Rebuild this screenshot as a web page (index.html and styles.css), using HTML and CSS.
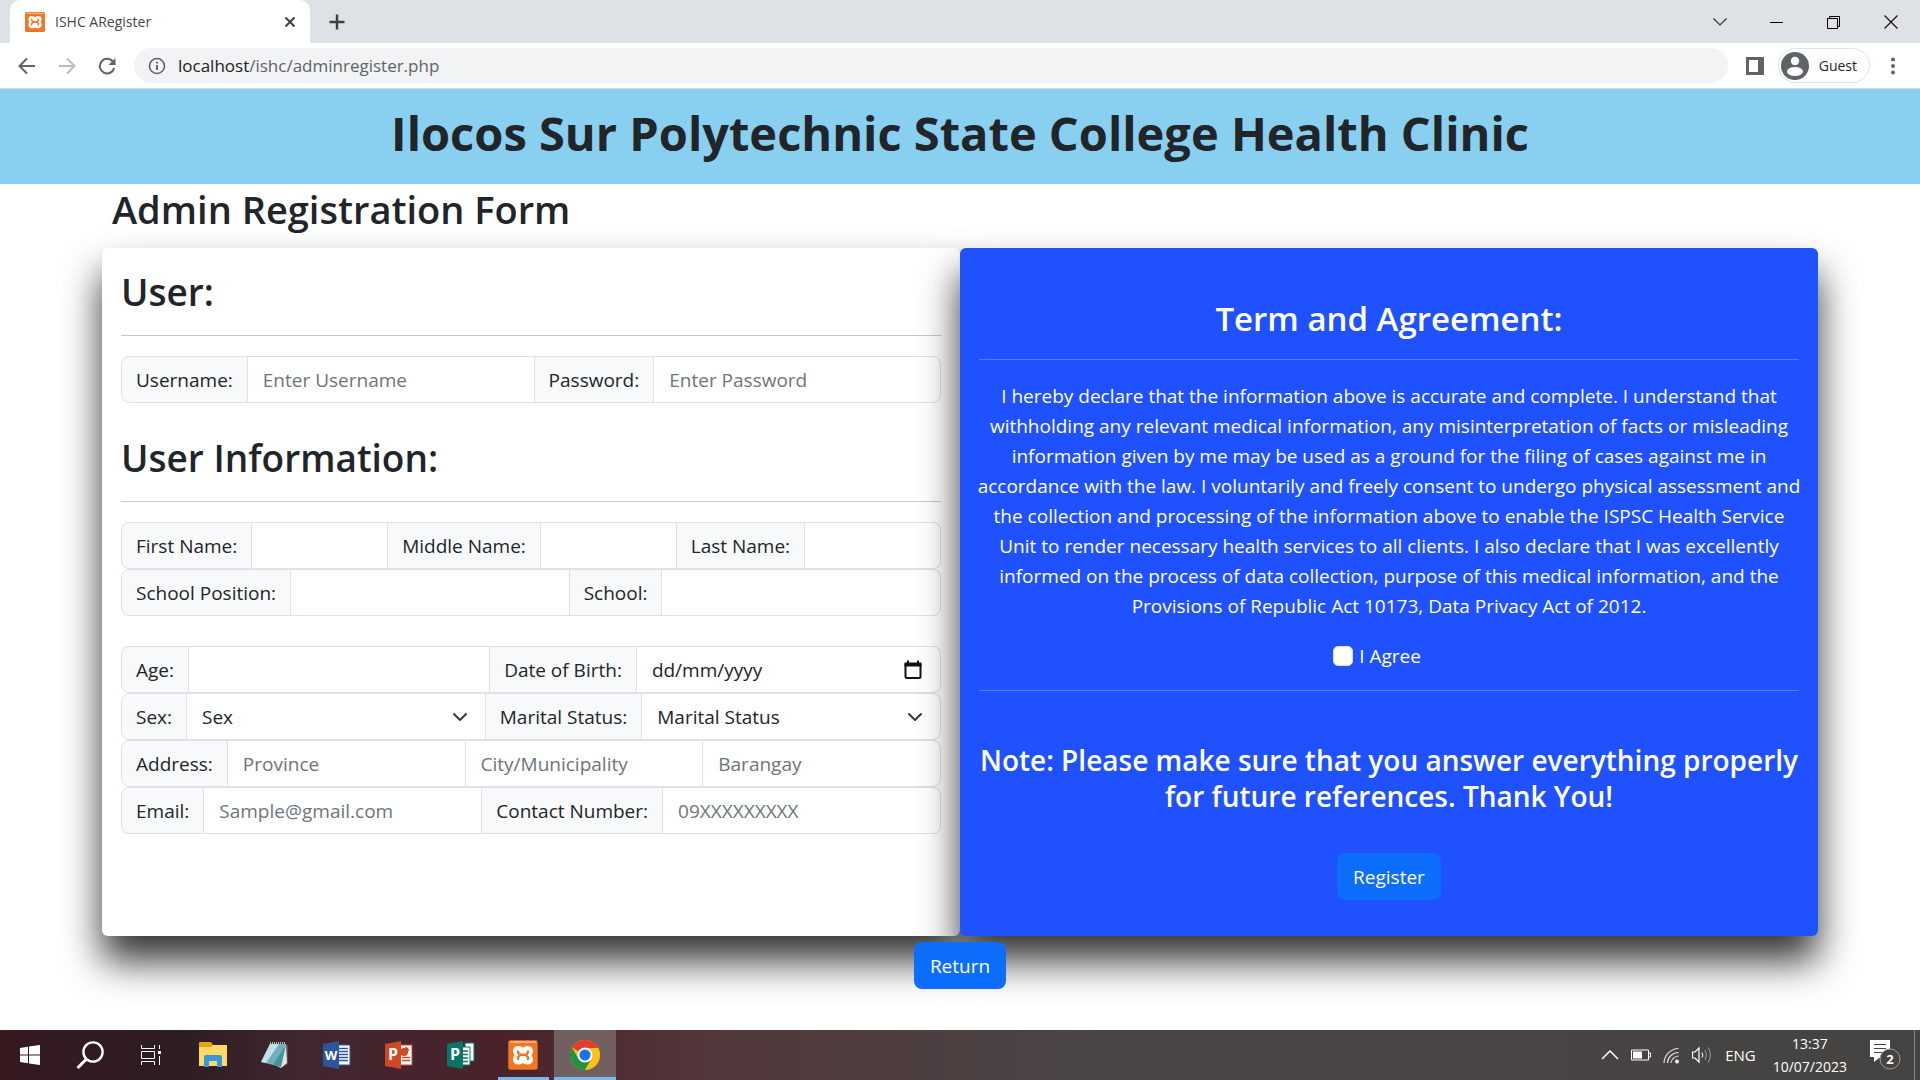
FILE: index.html
```html
<!DOCTYPE html>
<html lang="en">
<head>
<meta charset="utf-8">
<title>ISHC ARegister</title>
<link rel="stylesheet" href="styles.css">
</head>
<body>
<svg width="0" height="0" class="defs" aria-hidden="true">
  <symbol id="xampp" viewBox="0 0 30 30">
    <rect x="0.5" y="0.5" width="29" height="29" rx="2" fill="#f37623" stroke="#c85d1c"/>
    <rect x="2" y="1" width="26" height="2" fill="#f9ae7c"/>
    <path d="M15 10.500C13 6.500 7 6.500 6.500 11C6.500 13 8 14 8 15C8 16 6.500 17 6.500 19.500C7 24 13 24 15 20.500C17 24 23 24 23.500 19.500C23.500 17 22 16 22 15C22 14 23.500 13 23.500 11C23 6.500 17 6.500 15 10.500Z" fill="#fff" stroke="#fff" stroke-width="3" stroke-linejoin="round"/>
    <path d="M10 11.500V12.500L12 14.800L10 17.500V19M20 11.500V12.500L18 14.800L20 17.500V19M12 14.800H18" fill="none" stroke="#f37623" stroke-width="2.400" stroke-linecap="round" stroke-linejoin="round"/>
  </symbol>
</svg>

<header class="browser">
  <div class="tabstrip">
    <div class="tab">
      <svg class="favicon"><use href="#xampp"/></svg>
      <span class="tab-title">ISHC ARegister</span>
      <button class="icon-btn" aria-label="Close tab"><svg width="12" height="12" viewBox="0 0 12 12"><path d="M1.500 1.500L10.500 10.500M10.500 1.500L1.500 10.500" stroke="#3c4043" stroke-width="2"/></svg></button>
    </div>
    <button class="icon-btn newtab" aria-label="New tab"><svg width="16" height="16" viewBox="0 0 16 16"><path d="M8 0.500V15.500M0.500 8H15.500" stroke="#3c4043" stroke-width="2.400"/></svg></button>
    <div class="window-controls">
      <button class="icon-btn" aria-label="Search tabs"><svg width="14" height="14" viewBox="0 0 14 14"><path d="M0.500 3.500L7 10L13.500 3.500" fill="none" stroke="#333" stroke-width="1.200"/></svg></button>
      <button class="icon-btn" aria-label="Minimize"><svg width="14" height="14" viewBox="0 0 14 14"><path d="M0 7.500H13" stroke="#000"/></svg></button>
      <button class="icon-btn" aria-label="Restore"><svg width="14" height="14" viewBox="0 0 14 14"><path d="M0.500 3.500H10.500V13.500H0.500ZM2.500 3.500V1.500H12.500V11.500H10.500" fill="none" stroke="#000"/></svg></button>
      <button class="icon-btn" aria-label="Close"><svg width="14" height="14" viewBox="0 0 14 14"><path d="M0.500 0.500L13.500 13.500M13.500 0.500L0.500 13.500" stroke="#111" stroke-width="1.200"/></svg></button>
    </div>
  </div>
  <div class="toolbar">
    <button class="icon-btn" aria-label="Back"><svg width="18" height="18" viewBox="0 0 18 18"><path d="M17 9H2M9 1.500L1.500 9L9 16.500" fill="none" stroke="#5f6368" stroke-width="2"/></svg></button>
    <button class="icon-btn" aria-label="Forward"><svg width="18" height="18" viewBox="0 0 18 18"><path d="M1 9H16M9 1.500L16.500 9L9 16.500" fill="none" stroke="#babcbe" stroke-width="2"/></svg></button>
    <button class="icon-btn" aria-label="Reload"><svg width="18" height="18" viewBox="0 0 18 18"><path d="M14.800 4.500A7.300 7.300 0 1 0 16.200 11" fill="none" stroke="#5f6368" stroke-width="2"/><path d="M17.500 1V8H10.500Z" fill="#5f6368"/></svg></button>
    <div class="address">
      <svg width="18" height="18" viewBox="0 0 18 18"><circle cx="9" cy="9" r="7.500" fill="none" stroke="#5f6368" stroke-width="1.600"/><path d="M9 8V13M9 4.800V6.500" stroke="#5f6368" stroke-width="2"/></svg>
      <span class="url"><b>localhost</b>/ishc/adminregister.php</span>
    </div>
    <button class="icon-btn panel" aria-label="Side panel"><svg width="18" height="18" viewBox="0 0 18 18"><path d="M0 0H18V18H0ZM3 3V15H12V3Z" fill="#5f6368" fill-rule="evenodd"/></svg></button>
    <button class="profile"><svg width="28" height="28" viewBox="0 0 28 28"><circle cx="14" cy="14" r="14" fill="#5f6368"/><circle cx="14" cy="9" r="4.200" fill="#fff"/><ellipse cx="14" cy="19.500" rx="8" ry="4.500" fill="#fff"/></svg>Guest</button>
    <button class="icon-btn menu" aria-label="Menu"><svg width="6" height="18" viewBox="0 0 6 18"><g fill="#5f6368"><circle cx="3" cy="2.500" r="2"/><circle cx="3" cy="9" r="2"/><circle cx="3" cy="15.500" r="2"/></g></svg></button>
  </div>
</header>

<main class="page">
  <h1 class="banner">Ilocos Sur Polytechnic State College Health Clinic</h1>
  <form class="registration">
    <h2 class="form-title">Admin Registration Form</h2>
    <div class="cards">
      <section class="card">
        <h2>User:</h2>
        <hr>
        <div class="group">
          <label for="username">Username:</label><input id="username" type="text" placeholder="Enter Username">
          <label for="password">Password:</label><input id="password" type="password" placeholder="Enter Password">
        </div>
        <h2 class="next">User Information:</h2>
        <hr>
        <div class="group">
          <label for="first">First Name:</label><input id="first" type="text">
          <label for="middle">Middle Name:</label><input id="middle" type="text">
          <label for="last">Last Name:</label><input id="last" type="text">
        </div>
        <div class="group">
          <label for="position">School Position:</label><input id="position" type="text">
          <label for="school">School:</label><input id="school" type="text">
        </div>
        <div class="group spaced">
          <label for="age">Age:</label><input id="age" type="text">
          <label for="birth">Date of Birth:</label>
          <span class="date"><input id="birth" type="text" value="dd/mm/yyyy"><svg width="18" height="20" viewBox="0 0 18 20"><path d="M1.500 4V16.500Q1.500 18 3 18H15Q16.500 18 16.500 16.500V4" fill="none" stroke="#111" stroke-width="2"/><path d="M0.500 2.500H3V0.500H5V2.500H13V0.500H15V2.500H17.500V6.500H0.500Z" fill="#111"/></svg></span>
        </div>
        <div class="group">
          <label for="sex">Sex:</label><select id="sex"><option>Sex</option></select>
          <label for="marital">Marital Status:</label><select id="marital"><option>Marital Status</option></select>
        </div>
        <div class="group">
          <label for="province">Address:</label><input id="province" type="text" placeholder="Province">
          <input type="text" placeholder="City/Municipality" aria-label="City/Municipality">
          <input type="text" placeholder="Barangay" aria-label="Barangay">
        </div>
        <div class="group">
          <label for="email">Email:</label><input id="email" type="email" placeholder="Sample@gmail.com">
          <label for="contact">Contact Number:</label><input id="contact" type="tel" placeholder="09XXXXXXXXX">
        </div>
      </section>
      <section class="card terms">
        <h3>Term and Agreement:</h3>
        <hr>
        <p>I hereby declare that the information above is accurate and complete. I understand that withholding any relevant medical information, any misinterpretation of facts or misleading information given by me may be used as a ground for the filing of cases against me in accordance with the law. I voluntarily and freely consent to undergo physical assessment and the collection and processing of the information above to enable the ISPSC Health Service Unit to render necessary health services to all clients. I also declare that I was excellently informed on the process of data collection, purpose of this medical information, and the Provisions of Republic Act 10173, Data Privacy Act of 2012.</p>
        <label class="agree"><input type="checkbox">I Agree</label>
        <hr>
        <h4>Note: Please make sure that you answer everything properly for future references. Thank You!</h4>
        <button class="btn" type="button">Register</button>
      </section>
    </div>
    <a class="btn return" href="#">Return</a>
  </form>
</main>

<footer class="taskbar">
  <button class="task narrow" aria-label="Start"><svg width="20" height="20" viewBox="0 0 20 20"><path d="M0 3L8 1.800V9.500H0ZM9 1.600L20 0V9.500H9ZM0 10.500H8V18.200L0 17ZM9 10.500H20V20L9 18.400Z" fill="#fff"/></svg></button>
  <button class="task narrow" aria-label="Search"><svg width="28" height="28" viewBox="0 0 28 28"><circle cx="17" cy="11" r="9.600" fill="none" stroke="#fff" stroke-width="2.400"/><path d="M10.500 18L1.500 27" stroke="#fff" stroke-width="3"/></svg></button>
  <button class="task" aria-label="Task view"><svg width="20" height="20" viewBox="0 0 20 20"><path d="M0.500 0V3.500H13.500V0M0.500 6.500H13.500V13.500H0.500ZM0.500 20V16.500H13.500V20M18.500 0V4M18.500 11V20" fill="none" stroke="#fff"/><path d="M17 6H20V9H17Z" fill="#fff"/></svg></button>
  <button class="task" aria-label="File Explorer"><svg width="28" height="26" viewBox="0 0 28 26"><path d="M0 1Q0 0 1 0H12L14 3H27Q28 3 28 4V22H0Z" fill="#e5a50a"/><path d="M0 5H12L14 3H28V24H0Z" fill="#ffd968"/><path d="M5 25V15Q5 13 7 13H21Q23 13 23 15V25H18V19H10V25Z" fill="#3a96dd"/></svg></button>
  <button class="task" aria-label="Notepad"><svg width="28" height="28" viewBox="0 0 28 28"><path d="M22 3L27 4V23L21 26Z" fill="#6b4a36"/><path d="M9 3L25 3L20 26L0 21Z" fill="#6fb0bf"/><path d="M9 3L18 3L5 22L0 21Z" fill="#c4e0e6"/><path d="M25 3L26 22L20 27L16 25Z" fill="#dbe9ec"/><path d="M25 4L20 26L12 24Z" fill="#4a909f"/><path d="M9 2H25" stroke="#bbb" stroke-width="2" stroke-dasharray="1 1"/></svg></button>
  <button class="task" aria-label="Word"><svg width="28" height="28" viewBox="0 0 28 28"><path d="M14 4H27V24H14Z" fill="#fff" stroke="#2b579a"/><path d="M16 7.500H25M16 10.500H25M16 13.500H25M16 16.500H25M16 19.500H25" stroke="#2b579a" stroke-width="1.500"/><path d="M0 3L16 0V28L0 25Z" fill="#2b579a"/><text x="8" y="19" class="glyph">W</text></svg></button>
  <button class="task" aria-label="PowerPoint"><svg width="28" height="28" viewBox="0 0 28 28"><path d="M14 4H27V24H14Z" fill="#fff" stroke="#d24726"/><path d="M17 16.500H25M17 19.500H25" stroke="#d24726" stroke-width="1.500"/><circle cx="19" cy="11" r="4" fill="#d24726"/><path d="M20 10V6A4 4 0 0 1 24 10Z" fill="#d24726"/><path d="M0 3L16 0V28L0 25Z" fill="#d24726"/><text x="8" y="19" class="glyph big">P</text></svg></button>
  <button class="task" aria-label="Publisher"><svg width="28" height="28" viewBox="0 0 28 28"><path d="M18 2H27V20H18Z" fill="#fff" stroke="#077568"/><path d="M14 6H23V24H14Z" fill="#fff" stroke="#077568"/><path d="M16 10H21M16 13.500H21M16 17H21M16 20.500H21" stroke="#077568" stroke-width="1.500"/><path d="M0 3L16 0V28L0 25Z" fill="#077568"/><text x="8" y="19" class="glyph big">P</text></svg></button>
  <button class="task open" aria-label="XAMPP"><svg width="30" height="30"><use href="#xampp"/></svg></button>
  <button class="task open active" aria-label="Chrome"><svg width="30" height="30" viewBox="0 0 30 30"><circle cx="15" cy="15" r="15" fill="#fbc116"/><path d="M15 15L2 7.500A15 15 0 0 1 28 7.500Z" fill="#e33b2e"/><path d="M2 7.500A15 15 0 0 0 15 30L21.500 18.700L8.500 18.700Z" fill="#229342"/><path d="M15 8H28.200A15 15 0 0 1 15 30L21.500 18.700Z" fill="#fbc116"/><circle cx="15" cy="15" r="7.500" fill="#fff"/><circle cx="15" cy="15" r="5.600" fill="#1a73e8"/></svg></button>
  <div class="tray">
    <svg width="18" height="10" viewBox="0 0 18 10"><path d="M1 9L9 1L17 9" fill="none" stroke="#fff" stroke-width="1.500"/></svg>
    <svg width="20" height="12" viewBox="0 0 20 12"><path d="M0.500 1H17.500V11H0.500ZM18 4H19.500V8H18" fill="none" stroke="#fff"/><path d="M2 2.500H11V9.500H2Z" fill="#fff"/></svg>
    <svg width="17" height="17" viewBox="0 0 17 17"><g fill="none" stroke="#ddd" stroke-width="1.200"><path d="M1 16A15 15 0 0 1 15.500 1.500M4.500 16A11 11 0 0 1 15.500 5.500M8 16A8 8 0 0 1 15.500 9"/></g><circle cx="14" cy="14.500" r="2" fill="#fff"/></svg>
    <svg width="21" height="18" viewBox="0 0 21 18"><path d="M0.500 6H3L7 2V16L3 12H0.500Z" fill="none" stroke="#fff" stroke-width="1.200"/><path d="M10 6.500Q11.500 9 10 11.500" fill="none" stroke="#fff"/><path d="M13 4Q16 9 13 14M16 1.500Q21 9 16 16.500" fill="none" stroke="#999"/></svg>
    <span>ENG</span>
    <time class="clock">13:37<br>10/07/2023</time>
    <svg class="notice" width="32" height="32" viewBox="0 0 32 32"><path d="M0 1H20V19H9L4 23V18H0Z" fill="#fff"/><path d="M4 5.500H16M4 9.500H16M4 13.500H12" stroke="#444"/><circle cx="20" cy="20" r="10" fill="#454442" stroke="#999"/><text x="20" y="25" class="glyph">2</text></svg>
  </div>
</footer>
</body>
</html>
```
FILE: styles.css
```css
* { box-sizing: border-box; }

body {
  margin: 0;
  min-height: 100vh;
  display: flex;
  flex-direction: column;
  background: #fff;
  color: #212529;
  font: 19px/30px "Open Sans", "Noto Sans", sans-serif;
}

button, input, select { font: inherit; color: inherit; }
h1, h2, h3, h4, p { margin: 0; }
svg { flex: none; display: block; }
.defs { position: absolute; }

/* Browser frame */
.browser { border-bottom: 1px solid #d5d7da; }
.icon-btn {
  border: 0;
  padding: 0;
  background: none;
  display: grid;
  place-items: center;
}
.tabstrip {
  height: 43px;
  display: flex;
  align-items: center;
  background: #dee1e6;
  padding-left: 10px;
}
.tab {
  width: 300px;
  height: 43px;
  display: flex;
  align-items: center;
  gap: 10px;
  padding: 0 14px 0 15px;
  background: #fff;
  border-radius: 10px 10px 0 0;
  font-size: 14px;
  color: #45474a;
}
.favicon { width: 20px; height: 20px; }
.tab-title { flex: 1; }
.newtab { margin-left: 19px; }
.window-controls {
  margin-left: auto;
  padding-right: 22px;
  display: flex;
  gap: 43px;
  height: 37px;
}
.toolbar {
  height: 45px;
  display: flex;
  align-items: center;
  gap: 22px;
  padding: 0 24px 0 18px;
}
.address {
  flex: 1;
  height: 35px;
  display: flex;
  align-items: center;
  gap: 12px;
  margin-left: -4px;
  padding-left: 14px;
  border-radius: 18px;
  background: #f1f3f4;
  font-size: 17px;
  color: #5f6368;
}
.url b { font-weight: 400; color: #202124; }
.toolbar .panel { margin-left: -4px; }
.profile {
  display: flex;
  align-items: center;
  gap: 10px;
  height: 35px;
  margin-left: -8px;
  padding: 0 12px 0 2px;
  border: 1px solid #dfe1e5;
  border-radius: 18px;
  background: #fff;
  font-size: 14px;
}
.toolbar .menu { margin-left: -2px; }

/* Page */
.page { flex: 1; }
.banner {
  padding: 14px 0 21px;
  background: #89cff0;
  text-align: center;
  font-size: 47px;
  line-height: 60px;
  font-weight: 700;
}
.registration {
  padding: 0 102px;
  display: flex;
  flex-direction: column;
}
h2 {
  font-size: 37px;
  line-height: 48px;
  font-weight: 600;
}
.form-title {
  padding: 1px 10px 15px;
  font-size: 38px;
}
.cards {
  display: grid;
  grid-template-columns: 1fr 1fr;
  min-height: 688px;
}
.card {
  padding: 20px 19px;
  border-radius: 6px;
  background: #fff;
  box-shadow: 0 25px 38px rgba(0, 0, 0, 0.8);
}
hr {
  width: 100%;
  height: 1px;
  margin: 19px 0 20px;
  border: 0;
  background: #c7c8c9;
}
.next { margin-top: 31px; }

.group { display: flex; height: 47px; }
.spaced { margin-top: 30px; }
.group > * {
  border: 1px solid #dee2e6;
  border-left-width: 0;
  padding: 1px 15px 0;
}
.group > :first-child {
  border-left-width: 1px;
  border-radius: 8px 0 0 8px;
}
.group > :last-child { border-radius: 0 8px 8px 0; }
.group label {
  display: flex;
  align-items: center;
  padding: 1px 14px 0;
  white-space: nowrap;
  background: #f8f9fa;
}
.group input, .group select, .date {
  flex: 1;
  width: 0;
  min-width: 0;
}
.group input { background: none; }
.group .date { display: flex; align-items: center; padding-right: 18px; }
.date input { border: 0; padding: 0; }
.group select {
  appearance: none;
  background: url("data:image/svg+xml,%3Csvg xmlns='http://www.w3.org/2000/svg' viewBox='0 0 16 16'%3E%3Cpath fill='none' stroke='%23343a40' stroke-linecap='round' stroke-linejoin='round' stroke-width='2' d='m2 5 6 6 6-6'/%3E%3C/svg%3E") no-repeat right 16px center / 18px 16px;
}
::placeholder { color: #6c757d; opacity: 1; }

.terms {
  display: flex;
  flex-direction: column;
  align-items: center;
  padding: 50px 15px 20px;
  background: #1f51ff;
  color: #fff;
  text-align: center;
}
.terms h3 { font-size: 33px; line-height: 42px; font-weight: 600; }
.terms hr {
  flex: none;
  width: calc(100% - 8px);
  margin-bottom: 21px;
  background: #577dff;
}
.agree {
  margin-top: 20px;
  padding-right: 24px;
  display: flex;
  align-items: center;
  gap: 6px;
}
.agree input {
  appearance: none;
  width: 20px;
  height: 20px;
  margin: 0;
  background: #fff;
  border: 1px solid #dee2e6;
  border-radius: 5px;
}
.terms h4 {
  margin: 30px 0 39px;
  font-size: 28px;
  line-height: 36px;
  font-weight: 600;
}
.btn {
  height: 47px;
  padding: 1px 16px 0;
  border: 0;
  border-radius: 8px;
  background: #0d6efd;
  color: #fff;
  line-height: 47px;
  text-decoration: none;
}
.return { align-self: center; margin-top: 6px; position: relative; }

/* Taskbar */
.taskbar {
  height: 50px;
  display: flex;
  background: linear-gradient(90deg, #35191f 0, #2c1c22 180px, #41272f 300px, #4a222b 500px, #52373a 700px, #4a4545 1100px, #454442);
  color: #fff;
  font-size: 15px;
}
.task {
  width: 62px;
  padding: 0;
  border: 0;
  background: none;
  display: grid;
  place-items: center;
}
.narrow { width: 60px; }
.open { background: linear-gradient(#76b9ed, #76b9ed) center bottom / 51px 3px no-repeat; }
.active { background-color: #71605f; background-size: 62px 3px; }
.tray {
  margin-left: auto;
  padding-right: 5px;
  display: flex;
  align-items: center;
  gap: 12px;
}
.tray::after {
  content: "";
  width: 1px;
  height: 50px;
  background: #8a8988;
}
.clock {
  margin-left: 5px;
  font-size: 14px;
  line-height: 23px;
  text-align: center;
}
.notice { margin-left: 11px; }
.glyph {
  fill: #fff;
  font-size: 13px;
  font-weight: 700;
  text-anchor: middle;
}
.big { font-size: 16px; }
```
